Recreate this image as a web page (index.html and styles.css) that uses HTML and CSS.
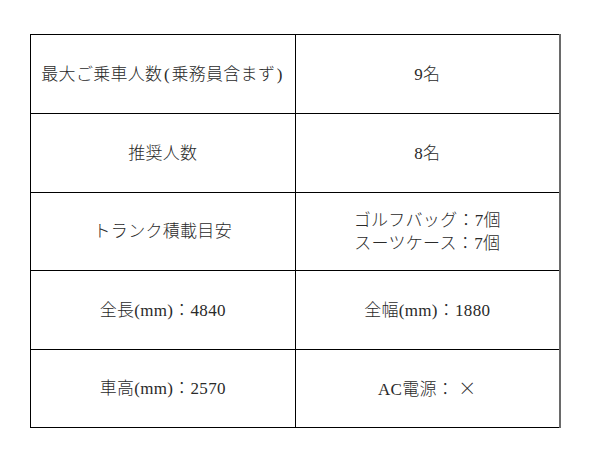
FILE: index.html
```html
<!DOCTYPE html>
<html lang="ja">
<head>
<meta charset="utf-8">
<link rel="stylesheet" href="styles.css">
</head>
<body>
<div class="wrap">
<table class="spec">
<tr class="r79"><td>最大ご乗車人数<span class="p">(</span>乗務員含まず<span class="p">)</span></td><td>9名</td></tr>
<tr class="r79"><td>推奨人数</td><td>8名</td></tr>
<tr class="r78"><td>トランク積載目安</td><td>ゴルフバッグ：7個<br>スーツケース：7個</td></tr>
<tr class="r79"><td>全長(mm)：4840</td><td>全幅(mm)：1880</td></tr>
<tr class="r78"><td>車高(mm)：2570</td><td>AC電源：<span class="x">×</span></td></tr>
</table>
</div>
</body>
</html>
```

FILE: styles.css
```css
html, body {
  margin: 0;
  padding: 0;
  background: #fff;
}
.wrap {
  padding: 34px 0 0 30px;
}
.spec {
  border-collapse: collapse;
  width: 531px;
  table-layout: fixed;
  font-family: "Liberation Serif", "Noto Sans CJK JP", serif;
  font-size: 17px;
  font-weight: 300;
  letter-spacing: 0.3px;
  line-height: 23px;
  color: #2a2a2a;
}
.spec td {
  border: 1px solid #000;
  text-align: center;
  vertical-align: middle;
  padding: 0;
  width: 50%;
}
.spec td:last-child {
  border-right: 2px solid #6a6a6a;
}
.r79 td { height: 78px; }
.r78 td { height: 77px; }
.p {
  padding: 0 1.5px;
}
.x {
  font-family: "Noto Sans CJK JP", sans-serif;
  font-size: 18px;
  padding-left: 4px;
}
```
